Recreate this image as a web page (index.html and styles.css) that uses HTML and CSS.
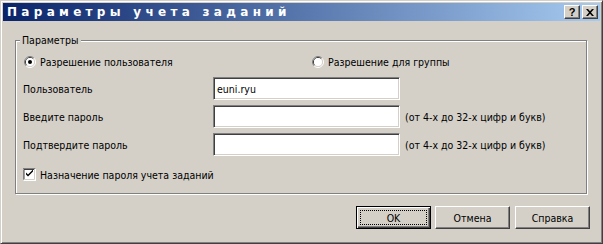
FILE: index.html
```html
<!DOCTYPE html>
<html lang="ru">

<head>
    <meta charset="UTF-8">
    <title>Параметры учета заданий</title>
    <link rel="stylesheet" href="styles.css">
</head>

<body>
    <div class="window">
        <div class="titlebar">
            <span class="title">Параметры учета заданий</span>
            <div class="title-buttons">
                <button class="tb-btn tb-help">?</button>
                <button class="tb-btn tb-close">
                    <svg width="8" height="7" viewBox="0 0 8 7">
                        <path d="M0 0h2l2 2.2L6 0h2L5 3.5 8 7H6L4 4.8 2 7H0l3-3.5z" fill="#000" />
                    </svg>
                </button>
            </div>
        </div>

        <div class="content">
            <fieldset class="group">
                <legend>Параметры</legend>

                <div class="radios">
                    <label class="radio radio-user">
                        <svg width="12" height="12" viewBox="0 0 12 12">
                            <path d="M2.11 9.89A5.5 5.5 0 0 1 9.89 2.11" stroke="#808080" fill="none" />
                            <path d="M9.89 2.11A5.5 5.5 0 0 1 2.11 9.89" stroke="#fff" fill="none" />
                            <path d="M2.82 9.18A4.5 4.5 0 0 1 9.18 2.82" stroke="#404040" fill="none" />
                            <path d="M9.18 2.82A4.5 4.5 0 0 1 2.82 9.18" stroke="#d4d0c8" fill="none" />
                            <circle cx="6" cy="6" r="4" fill="#fff" />
                            <circle cx="6" cy="6" r="2" fill="#000" />
                        </svg>
                        Разрешение пользователя
                    </label>
                    <label class="radio">
                        <svg width="12" height="12" viewBox="0 0 12 12">
                            <path d="M2.11 9.89A5.5 5.5 0 0 1 9.89 2.11" stroke="#808080" fill="none" />
                            <path d="M9.89 2.11A5.5 5.5 0 0 1 2.11 9.89" stroke="#fff" fill="none" />
                            <path d="M2.82 9.18A4.5 4.5 0 0 1 9.18 2.82" stroke="#404040" fill="none" />
                            <path d="M9.18 2.82A4.5 4.5 0 0 1 2.82 9.18" stroke="#d4d0c8" fill="none" />
                            <circle cx="6" cy="6" r="4" fill="#fff" />
                        </svg>
                        Разрешение для группы
                    </label>
                </div>

                <div class="fields">
                    <span>Пользователь</span>
                    <input class="edit" type="text" value="euni.ryu">
                    <span></span>

                    <span>Введите пароль</span>
                    <input class="edit" type="password">
                    <span>(от 4-х до 32-х цифр и букв)</span>

                    <span>Подтвердите пароль</span>
                    <input class="edit" type="password">
                    <span>(от 4-х до 32-х цифр и букв)</span>
                </div>

                <label class="check">
                    <svg width="13" height="13" viewBox="0 0 13 13">
                        <rect x="0" y="0" width="13" height="13" fill="#fff" />
                        <path d="M0 12.5V0.5H12.5" stroke="#808080" fill="none" />
                        <path d="M1 11.5V1.5H11.5" stroke="#404040" fill="none" />
                        <path d="M1.5 12V11.5H11.5V1" stroke="#d4d0c8" fill="none" />
                        <path d="M3 4.5v2l2 2 5-5v-2l-5 5z" fill="#000" />
                    </svg>
                    Назначение пароля учета заданий
                </label>
            </fieldset>

            <div class="actions">
                <button class="btn btn-default"><span class="focus">OK</span></button>
                <button class="btn">Отмена</button>
                <button class="btn btn-help">Справка</button>
            </div>
        </div>
    </div>
</body>

</html>
```

FILE: styles.css
```css
* {
    margin: 0;
    padding: 0;
    box-sizing: border-box;
}

body {
    background: #d4d0c8;
    font-family: "DejaVu Sans Condensed", "Liberation Sans", sans-serif;
    font-size: 10.5px;
    color: #000;
}

.window {
    width: 603px;
    height: 244px;
    background: #d4d0c8;
    border: 1px solid;
    border-color: #d4d0c8 #404040 #404040 #d4d0c8;
    box-shadow: inset 1px 1px #fff, inset -1px -1px #808080;
    padding: 2px;
}

/* заголовок окна */
.titlebar {
    height: 18px;
    display: flex;
    align-items: center;
    justify-content: space-between;
    padding: 0 2px 0 4px;
    background: linear-gradient(to right, #0a246a, #a6caf0);
}

.title {
    color: #fff;
    font-family: "DejaVu Sans", sans-serif;
    font-weight: bold;
    font-size: 12px;
    letter-spacing: 4.3px;
}

.title-buttons {
    display: flex;
    gap: 2px;
}

.tb-btn {
    width: 16px;
    height: 14px;
    display: flex;
    align-items: center;
    justify-content: center;
    background: #d4d0c8;
    border: 1px solid;
    border-color: #fff #404040 #404040 #fff;
    box-shadow: inset -1px -1px #808080;
    font-family: "Liberation Sans", sans-serif;
    font-weight: bold;
    font-size: 11px;
    line-height: 1;
}

/* содержимое */
.content {
    padding: 13px 10px 0 12px;
}

.group {
    width: 572px;
    height: 160px;
    border: 1px solid #808080;
    box-shadow: 1px 1px #fff, inset 1px 1px #fff;
    padding: 8px 7px 0 7px;
}

.group legend {
    padding: 0 2px;
    margin-left: -3px;
    line-height: 13px;
    background: #d4d0c8;
}

.radios {
    display: flex;
    align-items: center;
    height: 13px;
}

.radio {
    display: flex;
    align-items: center;
    gap: 4px;
}

.radio-user {
    width: 288px;
    margin-left: 1px;
}

.fields {
    display: grid;
    grid-template-columns: 185px 187px auto;
    grid-auto-rows: 23px;
    column-gap: 5px;
    row-gap: 5px;
    align-items: center;
    margin-top: 9px;
}

.edit {
    width: 187px;
    height: 23px;
    background: #fff;
    border: 1px solid;
    border-color: #808080 #fff #fff #808080;
    box-shadow: inset 1px 1px #404040, inset -1px -1px #d4d0c8;
    padding: 0 3px;
    font-family: inherit;
    font-size: 10.5px;
    outline: none;
}

.check {
    display: flex;
    align-items: center;
    gap: 4px;
    margin-top: 12px;
}

/* кнопки */
.actions {
    display: flex;
    justify-content: flex-end;
    gap: 4px;
    margin-top: 12px;
}

.btn {
    width: 75px;
    height: 23px;
    display: flex;
    align-items: center;
    justify-content: center;
    background: #d4d0c8;
    border: 1px solid;
    border-color: #fff #404040 #404040 #fff;
    box-shadow: inset -1px -1px #808080;
    font-family: inherit;
    font-size: 10.5px;
}

.btn-help {
    margin-left: 1px;
}

.btn-default {
    border-color: #000;
    box-shadow: inset 1px 1px #fff, inset -1px -1px #404040, inset -2px -2px #808080;
    padding: 3px;
}

.focus {
    width: 100%;
    height: 100%;
    display: flex;
    align-items: center;
    justify-content: center;
    border: 1px dotted #000;
}
```
